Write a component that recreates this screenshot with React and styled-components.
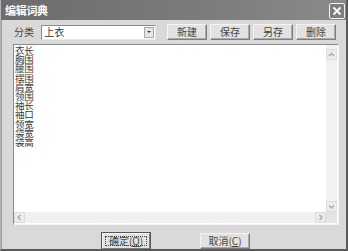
import React from "react";
import styled, { createGlobalStyle } from "styled-components";

const GlobalStyle = createGlobalStyle`
  html, body {
    margin: 0;
    padding: 0;
    background: #d9d9d9;
  }
  body {
    font-family: "Noto Sans CJK SC", "Liberation Sans", sans-serif;
  }
`;

const Window = styled.div`
  width: 348px;
  height: 251px;
  box-sizing: border-box;
  display: flex;
  flex-direction: column;
  background: #d9d9d9;
  border-left: 1px solid #b4b4b4;
  border-right: 2px solid #5a5a5a;
  border-bottom: 2px solid #5a5a5a;
`;

const TitleBar = styled.div`
  height: 20px;
  flex: none;
  display: flex;
  align-items: center;
  justify-content: space-between;
  padding: 0 1px 0 4px;
  background: linear-gradient(to right, #6c6c6c, #7c7c7c 60%, #8a8a8a);
`;

const Title = styled.span`
  color: #fff;
  font-size: 11px;
  font-weight: 700;
  letter-spacing: -0.3px;
  line-height: 1;
`;

const CloseBox = styled.div`
  width: 14px;
  height: 14px;
  margin-top: 2px;
  border: 1px solid #f2f2f2;
  border-radius: 2px;
  background: #7e7e7e;
  display: flex;
  align-items: center;
  justify-content: center;
`;

const Body = styled.div`
  flex: 1;
  display: flex;
  flex-direction: column;
  padding: 3px 10px 0 10px;
  border-left: 1px solid #9a9a9a;
`;

const Toolbar = styled.div`
  display: flex;
  align-items: center;
  height: 18px;
`;

const Label = styled.span`
  font-size: 10px;
  color: #444;
  margin-left: 2px;
  width: 28px;
  line-height: 1;
`;

const Combo = styled.div`
  width: 116px;
  height: 13px;
  border: 1px solid #8a8a8a;
  border-right-color: #e8e8e8;
  border-bottom-color: #e8e8e8;
  background: #fff;
  display: flex;
  align-items: center;
  justify-content: space-between;
`;

const ComboText = styled.span`
  font-size: 10px;
  color: #333;
  margin-left: 2px;
  line-height: 1;
`;

const ComboArrow = styled.div`
  width: 10px;
  height: 11px;
  margin-right: 1px;
  background: #e6e6e6;
  border: 1px solid #a8a8a8;
  box-sizing: border-box;
  display: flex;
  align-items: center;
  justify-content: center;
  &::after {
    content: "";
    border-left: 2px solid transparent;
    border-right: 2px solid transparent;
    border-top: 2px solid #333;
  }
`;

const Buttons = styled.div`
  display: flex;
  gap: 3px;
  margin-left: 11px;
`;

const Button = styled.div`
  width: ${(p) => p.$w || 40}px;
  height: ${(p) => p.$h || 16}px;
  box-sizing: border-box;
  background: #e2e2e2;
  border: 1px solid #f4f4f4;
  border-right-color: #7e7e7e;
  border-bottom-color: #7e7e7e;
  box-shadow: ${(p) => (p.$default ? "0 0 0 1px #555" : "inset -1px -1px 0 #aaa")};
  display: flex;
  align-items: center;
  justify-content: center;
  font-size: 10px;
  color: #444;
  line-height: 1;
  position: relative;
`;

const Focus = styled.div`
  position: absolute;
  inset: 2px;
  border: 1px dotted #444;
`;

const ListBox = styled.div`
  margin-top: 3px;
  margin-left: 1px;
  width: 326px;
  height: 181px;
  box-sizing: border-box;
  border: 1px solid #8a8a8a;
  border-right-color: #f4f4f4;
  border-bottom-color: #f4f4f4;
  background: #fff;
  display: grid;
  grid-template-columns: 1fr 11px;
  grid-template-rows: 1fr 11px;
  padding: 0 1px 1px 0;
`;

const Items = styled.div`
  padding: 1px 0 0 1px;
  display: flex;
  flex-direction: column;
`;

const Item = styled.div`
  font-size: 9.5px;
  line-height: 9.2px;
  height: 9.2px;
  color: #3c3c3c;
  letter-spacing: -0.3px;
`;

const VScroll = styled.div`
  background: #f1f1f1;
  display: flex;
  flex-direction: column;
  justify-content: space-between;
  padding-top: 4px;
`;

const HScroll = styled.div`
  background: #f1f1f1;
  display: flex;
  justify-content: space-between;
`;

const Corner = styled.div`
  background: #e4e4e4;
`;

const ArrowBtn = styled.div`
  width: 11px;
  height: 11px;
  box-sizing: border-box;
  background: #ececec;
  border: 1px solid #dcdcdc;
  display: flex;
  align-items: center;
  justify-content: center;
`;

const Footer = styled.div`
  display: flex;
  margin-top: 8px;
  padding-left: 90px;
  gap: 50px;
`;

const U = styled.span`
  text-decoration: underline;
`;

const Chevron = ({ dir }) => {
  const d = {
    up: "M2 6 L4.5 3.5 L7 6",
    down: "M2 3.5 L4.5 6 L7 3.5",
    left: "M5.5 2 L3 4.5 L5.5 7",
    right: "M3.5 2 L6 4.5 L3.5 7",
  }[dir];
  return (
    <svg width="9" height="9" viewBox="0 0 9 9">
      <path d={d} fill="none" stroke="#a8a8a8" strokeWidth="1.3" />
    </svg>
  );
};

const items = ["衣长", "胸围", "腰围", "摆围", "肩宽", "领围", "袖长", "袖口", "领宽", "袋宽", "袋高"];

export default function App() {
  return (
    <>
      <GlobalStyle />
      <Window>
        <TitleBar>
          <Title>编辑词典</Title>
          <CloseBox>
            <svg width="10" height="10" viewBox="0 0 10 10">
              <path d="M1.5 1.5 L8.5 8.5 M8.5 1.5 L1.5 8.5" stroke="#fff" strokeWidth="1.8" />
            </svg>
          </CloseBox>
        </TitleBar>
        <Body>
          <Toolbar>
            <Label>分类</Label>
            <Combo>
              <ComboText>上衣</ComboText>
              <ComboArrow />
            </Combo>
            <Buttons>
              <Button>新建</Button>
              <Button>保存</Button>
              <Button>另存</Button>
              <Button>删除</Button>
            </Buttons>
          </Toolbar>
          <ListBox>
            <Items>
              {items.map((t) => (
                <Item key={t}>{t}</Item>
              ))}
            </Items>
            <VScroll>
              <ArrowBtn>
                <Chevron dir="up" />
              </ArrowBtn>
              <ArrowBtn>
                <Chevron dir="down" />
              </ArrowBtn>
            </VScroll>
            <HScroll>
              <ArrowBtn>
                <Chevron dir="left" />
              </ArrowBtn>
              <ArrowBtn>
                <Chevron dir="right" />
              </ArrowBtn>
            </HScroll>
            <Corner />
          </ListBox>
          <Footer>
            <Button $w={48} $h={16} $default>
              <Focus />
              确定(<U>O</U>)
            </Button>
            <Button $w={50} $h={16}>
              取消(<U>C</U>)
            </Button>
          </Footer>
        </Body>
      </Window>
    </>
  );
}
